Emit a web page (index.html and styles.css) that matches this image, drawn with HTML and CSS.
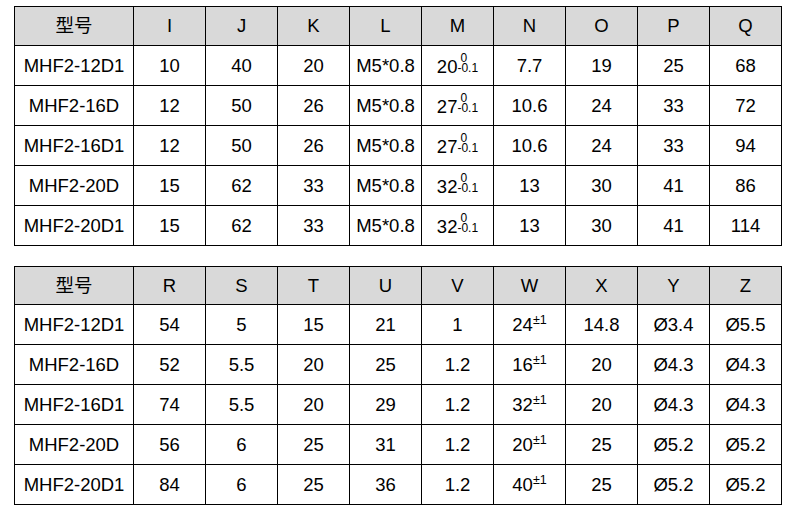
FILE: index.html
```html
<!DOCTYPE html>
<html lang="zh">
<head>
<meta charset="utf-8">
<title>MHF2 尺寸表</title>
<link rel="stylesheet" href="styles.css">
</head>
<body>
<div class="page">
<table class="spec">
  <colgroup><col class="c-model"><col><col><col><col><col><col><col><col><col></colgroup>
  <thead>
    <tr class="head"><th>型号</th><th>I</th><th>J</th><th>K</th><th>L</th><th>M</th><th>N</th><th>O</th><th>P</th><th>Q</th></tr>
  </thead>
  <tbody>
    <tr><td>MHF2-12D1</td><td>10</td><td>40</td><td>20</td><td>M5*0.8</td><td>20<span class="tol"><span class="up">0</span><span class="dn">-0.1</span></span></td><td>7.7</td><td>19</td><td>25</td><td>68</td></tr>
    <tr><td>MHF2-16D</td><td>12</td><td>50</td><td>26</td><td>M5*0.8</td><td>27<span class="tol"><span class="up">0</span><span class="dn">-0.1</span></span></td><td>10.6</td><td>24</td><td>33</td><td>72</td></tr>
    <tr><td>MHF2-16D1</td><td>12</td><td>50</td><td>26</td><td>M5*0.8</td><td>27<span class="tol"><span class="up">0</span><span class="dn">-0.1</span></span></td><td>10.6</td><td>24</td><td>33</td><td>94</td></tr>
    <tr><td>MHF2-20D</td><td>15</td><td>62</td><td>33</td><td>M5*0.8</td><td>32<span class="tol"><span class="up">0</span><span class="dn">-0.1</span></span></td><td>13</td><td>30</td><td>41</td><td>86</td></tr>
    <tr><td>MHF2-20D1</td><td>15</td><td>62</td><td>33</td><td>M5*0.8</td><td>32<span class="tol"><span class="up">0</span><span class="dn">-0.1</span></span></td><td>13</td><td>30</td><td>41</td><td>114</td></tr>
  </tbody>
</table>

<table class="spec second">
  <colgroup><col class="c-model"><col><col><col><col><col><col><col><col><col></colgroup>
  <thead>
    <tr class="head"><th>型号</th><th>R</th><th>S</th><th>T</th><th>U</th><th>V</th><th>W</th><th>X</th><th>Y</th><th>Z</th></tr>
  </thead>
  <tbody>
    <tr><td>MHF2-12D1</td><td>54</td><td>5</td><td>15</td><td>21</td><td>1</td><td>24<sup class="pm">±1</sup></td><td>14.8</td><td>Ø3.4</td><td>Ø5.5</td></tr>
    <tr><td>MHF2-16D</td><td>52</td><td>5.5</td><td>20</td><td>25</td><td>1.2</td><td>16<sup class="pm">±1</sup></td><td>20</td><td>Ø4.3</td><td>Ø4.3</td></tr>
    <tr><td>MHF2-16D1</td><td>74</td><td>5.5</td><td>20</td><td>29</td><td>1.2</td><td>32<sup class="pm">±1</sup></td><td>20</td><td>Ø4.3</td><td>Ø4.3</td></tr>
    <tr><td>MHF2-20D</td><td>56</td><td>6</td><td>25</td><td>31</td><td>1.2</td><td>20<sup class="pm">±1</sup></td><td>25</td><td>Ø5.2</td><td>Ø5.2</td></tr>
    <tr><td>MHF2-20D1</td><td>84</td><td>6</td><td>25</td><td>36</td><td>1.2</td><td>40<sup class="pm">±1</sup></td><td>25</td><td>Ø5.2</td><td>Ø5.2</td></tr>
  </tbody>
</table>
</div>
</body>
</html>
```

FILE: styles.css
```css
html, body {
  margin: 0;
  padding: 0;
  background: #ffffff;
}

.page {
  padding: 6px 0 0 14px;
  display: flex;
  flex-direction: column;
  gap: 20px;
  font-family: "Liberation Sans", Arial, "Noto Sans CJK SC", sans-serif;
  color: #000;
}

.spec {
  border-collapse: collapse;
  table-layout: fixed;
  width: 768px;
  font-size: 18.5px;
}

.spec col {
  width: 72px;
}

.spec col.c-model {
  width: 119px;
}

.spec th,
.spec td {
  border: 1px solid #000;
  padding: 0;
  text-align: center;
  vertical-align: middle;
  font-weight: normal;
  height: 39px;
  line-height: 20px;
  white-space: nowrap;
}

.spec .head th {
  background: #d9d9d9;
  height: 38px;
}

.spec.second .head th {
  height: 37px;
}

.tol {
  display: inline-block;
  font-size: 12px;
  line-height: 9.5px;
  vertical-align: 1px;
  text-align: left;
}

.tol .up,
.tol .dn {
  display: block;
}

.tol .up {
  padding-left: 3px;
}

.pm {
  font-size: 12.5px;
  vertical-align: 7px;
  line-height: 0;
}
```
